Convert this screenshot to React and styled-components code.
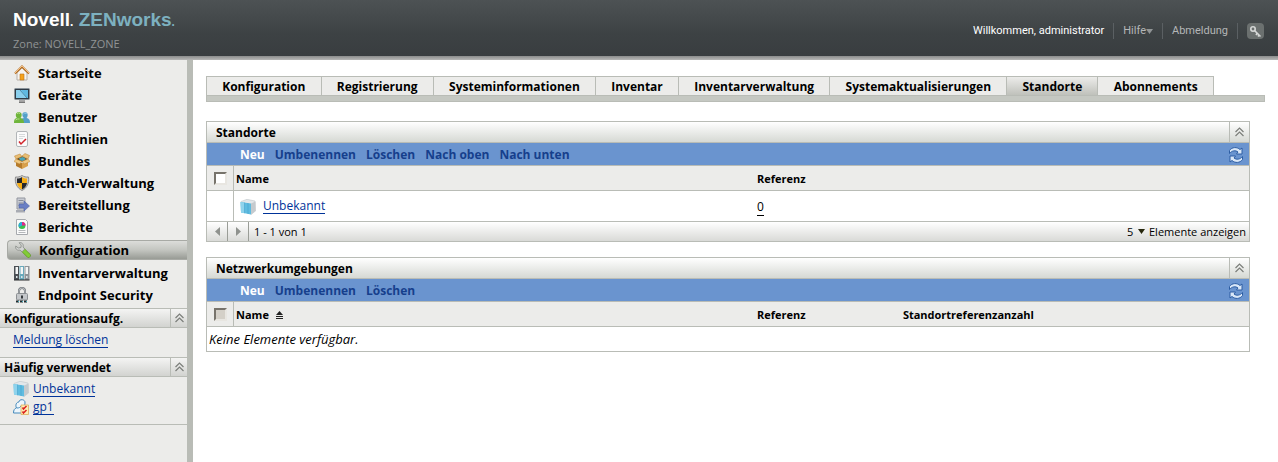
import { useState } from 'react';
import styled, { createGlobalStyle, css } from 'styled-components';

const colors = {
	border: '#b9bcb6',
	panelGray: '#ececea',
	toolbar: '#6a94cf',
	toolbarText: '#163f8c',
	link: '#003399',
	muted: '#b4b6b7',
};

const GlobalStyle = createGlobalStyle`
	* {
		box-sizing: border-box;
	}
	body {
		margin: 0;
		background: white;
		color: black;
		font-family: 'Open Sans', 'Noto Sans', sans-serif;
		font-size: 12px;
		line-height: 18px;
	}
	button, input, select {
		font: inherit;
		color: inherit;
		margin: 0;
		padding: 0;
		border: 0;
		background: none;
	}
	button {
		cursor: pointer;
	}
	svg {
		display: block;
		flex: none;
	}
`;

const Page = styled.div`
	display: flex;
	flex-direction: column;
	min-height: 100vh;
`;

const Header = styled.header`
	display: flex;
	justify-content: space-between;
	height: 56px;
	padding: 0 14px 0 13px;
	background: linear-gradient(#4d5254, #3d4244 60%, #393d40);
`;

const HeaderEdge = styled.div`
	height: 4px;
	background: linear-gradient(#8b8c8c, #b8b8b7);
`;

const Brand = styled.div`
	padding-top: 10px;
`;

const Logo = styled.div`
	font: bold 19px/20px 'Liberation Sans', Arial, sans-serif;
	color: white;
	white-space: nowrap;
	span {
		color: #7db1c0;
	}
	small {
		font-size: 12px;
	}
`;

const Zone = styled.div`
	font-size: 11px;
	line-height: 24px;
	color: #909394;
`;

const UserBar = styled.div`
	display: flex;
	align-items: center;
	height: 20px;
	margin-top: 21px;
	font-family: Roboto, sans-serif;
	font-size: 11px;
	color: white;
`;

const UserItem = styled.div`
	padding: 0 9px;
	line-height: 16px;
	border-right: 1px solid #5b6063;
	> a, > button {
		display: flex;
		align-items: center;
		color: ${colors.muted};
		text-decoration: none;
	}
`;

const KeyButton = styled.button`
	display: grid;
	place-items: center;
	width: 17px;
	height: 16px;
	margin-left: 9px;
	border-radius: 4px;
	background: #6b706f;
`;

const Body = styled.div`
	display: flex;
	flex: 1;
`;

const Sidebar = styled.aside`
	flex: none;
	width: 193px;
	background: ${colors.panelGray};
	border-right: 6px solid ${colors.border};
`;

const Nav = styled.nav`
	padding: 2px 0;
`;

const NavLink = styled.a`
	display: flex;
	align-items: center;
	gap: 8px;
	height: 22px;
	padding-left: 14px;
	font-size: 13px;
	font-weight: bold;
	color: black;
	text-decoration: none;
	white-space: nowrap;
	${(props) =>
		props.$active &&
		css`
			height: 20px;
			margin: 2px 0 2px 7px;
			padding-left: 7px;
			border: 1px solid #a8aaa5;
			border-right: 0;
			border-radius: 4px 0 0 4px;
			background: linear-gradient(#dcddda, #c3c5c0 50%, #989b95);
		`}
`;

const SideHeading = styled.div`
	display: flex;
	align-items: stretch;
	height: 20px;
	border: solid ${colors.border};
	border-width: 1px 0;
	background: linear-gradient(#f4f4f3, #d2d3d0);
	h2 {
		flex: 1;
		margin: 0;
		padding: 1px 0 0 4px;
		font-size: 12px;
		line-height: 17px;
		white-space: nowrap;
	}
`;

const CollapseButton = styled.button`
	display: grid;
	place-items: center;
	width: ${(props) => (props.$wide ? 20 : 17)}px;
	border-left: 1px solid ${colors.border};
`;

const SideList = styled.ul`
	margin: 0;
	padding: 3px 13px 8px;
	list-style: none;
	li {
		display: flex;
		align-items: center;
		gap: 4px;
		height: 18px;
	}
`;

const SideEnd = styled.div`
	border-top: 1px solid ${colors.border};
`;

const Link = styled.a`
	color: ${(props) => (props.$plain ? 'black' : colors.link)};
	text-decoration: none;
	border-bottom: 1px solid;
	line-height: 14px;
`;

const Main = styled.main`
	flex: 1;
	min-width: 0;
	padding: 16px 13px;
`;

const Tabs = styled.div`
	display: flex;
	height: 19px;
	padding-right: 51px;
`;

const Tab = styled.button`
	flex: 1 0 auto;
	padding-top: 1px;
	border: solid ${colors.border};
	border-width: 1px 1px 0 0;
	background: ${(props) => (props.$active ? 'linear-gradient(#ececea, #bfc1bb)' : colors.panelGray)};
	font-size: 12px;
	font-weight: bold;
	line-height: 17px;
	white-space: nowrap;
	&:first-child {
		border-left-width: 1px;
	}
`;

const TabBar = styled.div`
	height: 7px;
	border: 1px solid ${colors.border};
	background: #c5c8c2;
`;

const Panels = styled.div`
	display: grid;
	gap: 15px;
	padding: 19px 15px 0 0;
`;

const PanelBox = styled.section`
	border: 1px solid ${colors.border};
`;

const PanelHeading = styled.div`
	display: flex;
	height: 21px;
	border-bottom: 1px solid ${colors.border};
	background: linear-gradient(white, #d6d9d4);
	h2 {
		flex: 1;
		margin: 0;
		padding: 1px 0 0 9px;
		font-size: 12px;
		line-height: 19px;
	}
`;

const Toolbar = styled.div`
	display: flex;
	align-items: center;
	gap: 10px;
	height: 23px;
	padding: 0 5px 0 33px;
	border-bottom: 1px solid ${colors.border};
	background: ${colors.toolbar};
	button {
		padding-top: 1px;
		font-weight: bold;
		color: ${colors.toolbarText};
	}
	button:first-child {
		color: white;
	}
	button:last-child {
		margin-left: auto;
	}
`;

const Table = styled.table`
	width: 100%;
	table-layout: fixed;
	border-spacing: 0;
	th, td {
		padding: 1px 2px 0;
		text-align: left;
	}
	th {
		height: 25px;
		font-size: 11px;
		background: ${colors.panelGray};
		border-bottom: 1px solid ${colors.border};
	}
	td {
		height: ${(props) => (props.$empty ? 24 : 30)}px;
	}
	th:first-child, td:first-child:not([colspan]) {
		width: 27px;
		padding: 0 0 0 7px;
		border-right: 1px solid ${colors.border};
	}
	th:nth-child(2) {
		width: 50%;
	}
	th:nth-child(3):not(:last-child) {
		width: 14%;
	}
`;

const Checkbox = styled.input.attrs({ type: 'checkbox' })`
	display: block;
	appearance: none;
	width: 13px;
	height: 13px;
	border: 2px solid;
	border-color: #77736b #e8e6e1 #e8e6e1 #77736b;
	background: ${(props) => (props.disabled ? '#d4d0c8' : 'white')};
	&:checked {
		background: #444;
	}
`;

const CellLine = styled.div`
	display: flex;
	align-items: center;
	gap: 7px;
	padding-left: ${(props) => (props.$indent ? 4 : 0)}px;
`;

const Empty = styled.em`
	font-size: 13px;
`;

const Footer = styled.div`
	display: flex;
	align-items: center;
	height: 20px;
	border-top: 1px solid ${colors.border};
	background: linear-gradient(white, #d9dad7);
	font-size: 11px;
`;

const PageButton = styled.button`
	display: grid;
	place-items: center;
	width: 21px;
	height: 19px;
	border-right: 1px solid #9a9d97;
`;

const PageInfo = styled.span`
	padding-left: 5px;
`;

const PageSize = styled.label`
	display: flex;
	align-items: center;
	gap: 4px;
	margin-left: auto;
	padding-right: 3px;
	select {
		appearance: none;
		width: 7px;
	}
`;

const House = () => (
	<svg width='16' height='16' viewBox='0 0 16 16'>
		<path d='M3 7.500 8 3l5 4.500V15H3z' fill='#f6f3ee' stroke='#b7b0a8' />
		<path d='M1 8.500 8 1.500l7 7' fill='none' stroke='#b86f22' strokeWidth='2' />
		<path d='M1 8 8 1l7 7' fill='none' stroke='#efc18a' />
		<path d='M6 9h4v6H6z' fill='#f5a21a' stroke='#bd731a' strokeWidth='.6' />
	</svg>
);

const Monitor = () => (
	<svg width='16' height='16' viewBox='0 0 16 16'>
		<rect x='.5' y='1.500' width='15' height='11' rx='1' fill='#303b45' stroke='#8a949b' />
		<path d='M2 3h12v8H2z' fill='#60b9e1' />
		<path d='M2 3h5l6 8H2z' fill='#8ad0ee' />
		<path d='m6 3 7 8' stroke='#34718f' strokeWidth='.7' />
		<path d='M5 13h6v1.500H5z' fill='#aaa' />
		<path d='M5 14.500h6V16H5z' fill='#777' />
	</svg>
);

const Users = () => (
	<svg width='16' height='16' viewBox='0 0 16 16'>
		<path d='M8 14V9.500l2-.5C7.500 7 8 3 11 3s3.500 4 1.500 6c2.500.5 3.500 1.500 3.500 5z' fill='#549fc8' />
		<path d='M9.500 5q1-2 3-.5' stroke='#9fd3ec' fill='none' />
		<path d='M0 14c0-3 .5-4.500 3-5C1 7 1.500 3 4.800 3s3.700 4 1.700 6c2.500.5 3.500 2 3.500 5z' fill='#6fb53b' />
		<path d='M3 5q1-2 3-.5M1.500 11q2-1.500 4-1' stroke='#b5dd8c' fill='none' />
	</svg>
);

const Policy = () => (
	<svg width='16' height='16' viewBox='0 0 16 16'>
		<rect x='2.500' y='.5' width='11' height='15' rx='1.500' fill='#fbfbfb' stroke='#b2b5b8' />
		<path d='M5 3.500h6M5 5.500h6M5 7.500h4' stroke='#d6d9db' />
		<path d='m5 10.500 2 2.500 5-5' fill='none' stroke='#d2232a' strokeWidth='1.500' />
	</svg>
);

const Bundle = () => (
	<svg width='16' height='16' viewBox='0 0 16 16'>
		<path d='m2 8 6 2v6l-6-3z' fill='#b67b2a' />
		<path d='m8 10 6-2v5l-6 3z' fill='#d9a04a' />
		<path d='m2 6 6-3 6 3-6 3z' fill='#6b481b' />
		<path d='m5 5 4-1 3 2-3 2-3-.5z' fill='#49a6b8' />
		<path d='M2 6 .500 3 6 1l2 2.500zM14 6l1.500-3.500L11 .5 8 3z' fill='#e9be73' stroke='#b98236' strokeWidth='.5' />
		<path d='M2 6 0 8.500 5.500 11 8 8.500zM14 6l2 2.500-5.500 2.500L8 8.500z' fill='#efc880' stroke='#b98236' strokeWidth='.5' />
	</svg>
);

const Shield = () => (
	<svg width='16' height='16' viewBox='0 0 16 16'>
		<path d='M8 .5c2 1.300 4 1.700 6.500 1.500 1 6-1.500 11-6.500 13.500C3 13 .5 8 1.500 2 4 2.200 6 1.800 8 .5z' fill='#ccc' stroke='#8e8e8e' />
		<path d='M8 2v6H3V3.500C5 3.500 6.500 3 8 2zM8 8h5c-.5 3-2 5-5 6.500z' fill='#26282c' />
		<path d='M8 2c1.500 1 3 1.500 5 1.500V8H8zM3 8h5v6.500C5 13 3.500 11 3 8z' fill='#f7ae14' />
	</svg>
);

const Deploy = () => (
	<svg width='16' height='16' viewBox='0 0 16 16'>
		<path d='M3 1h8v11H3z' fill='#c9ccd3' stroke='#93969f' />
		<path d='M4.500 3.500h5M4.500 6h5M4.500 8.500h4' stroke='#858b98' />
		<path d='M2 13h9v2.500H2z' fill='#a8abb2' />
		<path d='M5 7h5V4l5.500 5-5.500 5v-3H5z' fill='#6a7fc4' stroke='#5064a6' strokeWidth='.6' />
	</svg>
);

const Report = () => (
	<svg width='16' height='16' viewBox='0 0 16 16'>
		<path d='M2.500.5h9l2 2v13h-11z' fill='#fbfbfb' stroke='#a6a9ad' />
		<circle cx='8' cy='6.500' r='3.500' fill='#3bbf4a' />
		<path d='M8 6.500V3a3.500 3.500 0 0 0-3 5.200z' fill='#2ca9e0' />
		<path d='M8 6.500V3a3.500 3.500 0 0 1 3.500 3.500z' fill='#e6238a' />
		<path d='M4.500 11.500h7M4.500 13.500h7' stroke='#b5b8bb' />
	</svg>
);

const Wrench = () => (
	<svg width='16' height='16' viewBox='0 0 16 16'>
		<path d='m8.500 8.500 5 5' stroke='#5c9b1d' strokeWidth='4.500' strokeLinecap='round' />
		<path d='m8.500 8.500 5 5' stroke='#83cb38' strokeWidth='3.200' strokeLinecap='round' />
		<path d='M4 .8c3-.8 5 1.700 4 4.200l1.800 2L7 9.800 5 8C2.500 9 0 7 .8 4l2.500 2L6 5.500l.2-2.500z' fill='#d4d6d4' stroke='#888b87' strokeWidth='.8' />
	</svg>
);

const Binders = () => (
	<svg width='16' height='16' viewBox='0 0 16 16'>
		<path d='M0 1h5v14H0z' fill='#4a4f54' />
		<path d='M5.500 1h4.500v14H5.500z' fill='#69a9bb' />
		<path d='M10.500 1h5v14h-5z' fill='#8f9498' />
		<path d='M1.500 2h2.500v7H1.500zM6.500 2H9v7H6.500zM11.500 2H14v7h-2.500z' fill='#f4f5f5' />
		<path d='M2 11h1.500v2H2zM7 11h1.500v2H7zM12 11h1.500v2H12z' fill='#dce5e8' />
		<path d='M0 15h15.500' stroke='#26292b' />
	</svg>
);

const Lock = () => (
	<svg width='16' height='16' viewBox='0 0 16 16'>
		<path d='M5 7V4a3 3 0 0 1 6 0v3' fill='none' stroke='#70757a' strokeWidth='2' />
		<path d='M5 7V4a3 3 0 0 1 6 0v3' fill='none' stroke='#d0d3d5' strokeWidth='.7' />
		<rect x='2.500' y='6.500' width='11' height='6.500' rx='1' fill='#c4c7ca' stroke='#8b8f92' />
		<path d='M7 8.500h2v3H7z' fill='#34383b' />
		<path d='M2 14.500h12' stroke='#202a2e' strokeWidth='2' strokeDasharray='3 1' />
		<path d='M4 14.500h10' stroke='#42b5c7' strokeDasharray='1 3' />
	</svg>
);

const Location = () => (
	<svg width='16' height='16' viewBox='0 0 16 16'>
		<path d='M1 2.500 7 .3l8 1.700.5 10-4.500 3.500z' fill='#e3e7ea' stroke='#b7bec3' strokeWidth='.5' />
		<path d='m11 4.500 4.500-2v9.500L11 15.500z' fill='#c5cace' />
		<path d='m.5 3 10.500 1.500v11L1 13.500z' fill='#5fbce0' />
		<path d='m.5 3 4 .6v10.600L1 13.500z' fill='#8fd3ec' />
		<path d='M4.500 3.600v10.600M8 4v11' stroke='#3c9bc8' strokeWidth='.5' />
	</svg>
);

const GroupPolicy = () => (
	<svg width='16' height='16' viewBox='0 0 16 16'>
		<path d='M.5 14c0-3 1-4.500 3-5C2 6 3.500 3 6 3c0-3.500 6.500-3 6 1 0 2-1 3-2 4l-1 6z' fill='#edf6fc' stroke='#4489bb' />
		<path d='M4 9c2 0 3-.5 4-2' fill='none' stroke='#4489bb' />
		<path d='M8 6h7.500v9.500H8z' fill='#ffedb5' stroke='#d8a84a' strokeWidth='.7' />
		<path d='m9.500 8.500 1 1.500 3-3M9.500 12.500l1 1.500 3-3' fill='none' stroke='#dc1f1f' strokeWidth='1.500' />
	</svg>
);

const Refresh = () => (
	<svg width='16' height='16' viewBox='0 0 16 16'>
		<path d='M1.500 6.500V3.500C4-.2 9-.2 12 2.500l2-1.500v6H8.500l1.500-2C7.500 3 4 3.500 1.500 6.500z' fill='#d9e7f8' stroke='#2c5da3' />
		<path d='M14.500 9.500v3C12 16.200 7 16.200 4 13.500L2 15V9h5.500L6 11c2.500 2 6 1.500 8.500-1.500z' fill='#d9e7f8' stroke='#2c5da3' />
	</svg>
);

const Key = () => (
	<svg width='13' height='13' viewBox='0 0 13 13'>
		<circle cx='4' cy='4' r='2.200' fill='none' stroke='#d6d8d7' strokeWidth='1.600' />
		<path d='m5.500 5.500 6 6M8 8.500l-1 1.500M10 10l-1 1.500' stroke='#d6d8d7' strokeWidth='1.600' />
	</svg>
);

const Chevrons = () => (
	<svg width='9' height='10' viewBox='0 0 9 10'>
		<path d='m.5 5 4-4 4 4M.5 9l4-4 4 4' fill='none' stroke='#7b7e7a' strokeWidth='1.200' />
	</svg>
);

const SortUp = () => (
	<svg width='7' height='8' viewBox='0 0 7 8'>
		<path d='M3.500 0 7 4H0zM0 5h7v1H0zM0 7h7v1H0z' fill='#222' />
	</svg>
);

const Caret = ({ color }) => (
	<svg width='7' height='5' viewBox='0 0 7 5'>
		<path d='M0 0h7L3.500 5z' fill={color} />
	</svg>
);

const PageArrow = ({ next }) => (
	<svg width='5' height='9' viewBox='0 0 5 9'>
		<path d={next ? 'M0 0v9l5-4.500z' : 'M5 0v9L0 4.500z'} fill='#8f928e' />
	</svg>
);

const navItems = [
	{ label: 'Startseite', Icon: House },
	{ label: 'Geräte', Icon: Monitor },
	{ label: 'Benutzer', Icon: Users },
	{ label: 'Richtlinien', Icon: Policy },
	{ label: 'Bundles', Icon: Bundle },
	{ label: 'Patch-Verwaltung', Icon: Shield },
	{ label: 'Bereitstellung', Icon: Deploy },
	{ label: 'Berichte', Icon: Report },
	{ label: 'Konfiguration', Icon: Wrench },
	{ label: 'Inventarverwaltung', Icon: Binders },
	{ label: 'Endpoint Security', Icon: Lock },
];

const tabs = [
	'Konfiguration',
	'Registrierung',
	'Systeminformationen',
	'Inventar',
	'Inventarverwaltung',
	'Systemaktualisierungen',
	'Standorte',
	'Abonnements',
];

const SideSection = ({ title, children }) => {
	const [open, setOpen] = useState(true);
	return (
		<section>
			<SideHeading>
				<h2>{title}</h2>
				<CollapseButton aria-label={title} onClick={() => setOpen(!open)}>
					<Chevrons />
				</CollapseButton>
			</SideHeading>
			{open && <SideList>{children}</SideList>}
		</section>
	);
};

const Panel = ({ title, actions, children }) => {
	const [open, setOpen] = useState(true);
	return (
		<PanelBox>
			<PanelHeading>
				<h2>{title}</h2>
				<CollapseButton $wide aria-label={title} onClick={() => setOpen(!open)}>
					<Chevrons />
				</CollapseButton>
			</PanelHeading>
			{open && (
				<>
					<Toolbar>
						{actions.map((action) => (
							<button key={action}>{action}</button>
						))}
						<button aria-label='Aktualisieren'>
							<Refresh />
						</button>
					</Toolbar>
					{children}
				</>
			)}
		</PanelBox>
	);
};

const App = () => {
	const [activeTab, setActiveTab] = useState('Standorte');

	return (
		<Page>
			<GlobalStyle />
			<Header>
				<Brand>
					<Logo>
						Novell<small>.</small> <span>ZENworks<small>.</small></span>
					</Logo>
					<Zone>Zone: NOVELL_ZONE</Zone>
				</Brand>
				<UserBar>
					<UserItem>Willkommen, administrator</UserItem>
					<UserItem>
						<button>
							Hilfe
							<Caret color='#919596' />
						</button>
					</UserItem>
					<UserItem>
						<a href='#logout'>Abmeldung</a>
					</UserItem>
					<KeyButton aria-label='Schlüssel'>
						<Key />
					</KeyButton>
				</UserBar>
			</Header>
			<HeaderEdge />

			<Body>
				<Sidebar>
					<Nav>
						{navItems.map(({ label, Icon }) => (
							<NavLink key={label} href='#nav' $active={label === 'Konfiguration'}>
								<Icon />
								{label}
							</NavLink>
						))}
					</Nav>
					<SideSection title='Konfigurationsaufg.'>
						<li>
							<Link href='#meldung'>Meldung löschen</Link>
						</li>
					</SideSection>
					<SideSection title='Häufig verwendet'>
						<li>
							<Location />
							<Link href='#unbekannt'>Unbekannt</Link>
						</li>
						<li>
							<GroupPolicy />
							<Link href='#gp1'>gp1</Link>
						</li>
					</SideSection>
					<SideEnd />
				</Sidebar>

				<Main>
					<Tabs>
						{tabs.map((tab) => (
							<Tab key={tab} $active={tab === activeTab} onClick={() => setActiveTab(tab)}>
								{tab}
							</Tab>
						))}
					</Tabs>
					<TabBar />

					<Panels>
						<Panel title='Standorte' actions={['Neu', 'Umbenennen', 'Löschen', 'Nach oben', 'Nach unten']}>
							<Table>
								<thead>
									<tr>
										<th>
											<Checkbox aria-label='Alle Standorte' />
										</th>
										<th>Name</th>
										<th>Referenz</th>
									</tr>
								</thead>
								<tbody>
									<tr>
										<td />
										<td>
											<CellLine $indent>
												<Location />
												<Link href='#unbekannt'>Unbekannt</Link>
											</CellLine>
										</td>
										<td>
											<Link $plain href='#referenz'>
												0
											</Link>
										</td>
									</tr>
								</tbody>
							</Table>
							<Footer>
								<PageButton aria-label='Zurück'>
									<PageArrow />
								</PageButton>
								<PageButton aria-label='Weiter'>
									<PageArrow next />
								</PageButton>
								<PageInfo>1 - 1 von 1</PageInfo>
								<PageSize>
									<select defaultValue='5'>
										<option>5</option>
									</select>
									<Caret color='#26260c' />
									Elemente anzeigen
								</PageSize>
							</Footer>
						</Panel>

						<Panel title='Netzwerkumgebungen' actions={['Neu', 'Umbenennen', 'Löschen']}>
							<Table $empty>
								<thead>
									<tr>
										<th>
											<Checkbox disabled aria-label='Alle Netzwerkumgebungen' />
										</th>
										<th>
											<CellLine>
												Name
												<SortUp />
											</CellLine>
										</th>
										<th>Referenz</th>
										<th>Standortreferenzanzahl</th>
									</tr>
								</thead>
								<tbody>
									<tr>
										<td colSpan={4}>
											<Empty>Keine Elemente verfügbar.</Empty>
										</td>
									</tr>
								</tbody>
							</Table>
						</Panel>
					</Panels>
				</Main>
			</Body>
		</Page>
	);
};

export default App;
